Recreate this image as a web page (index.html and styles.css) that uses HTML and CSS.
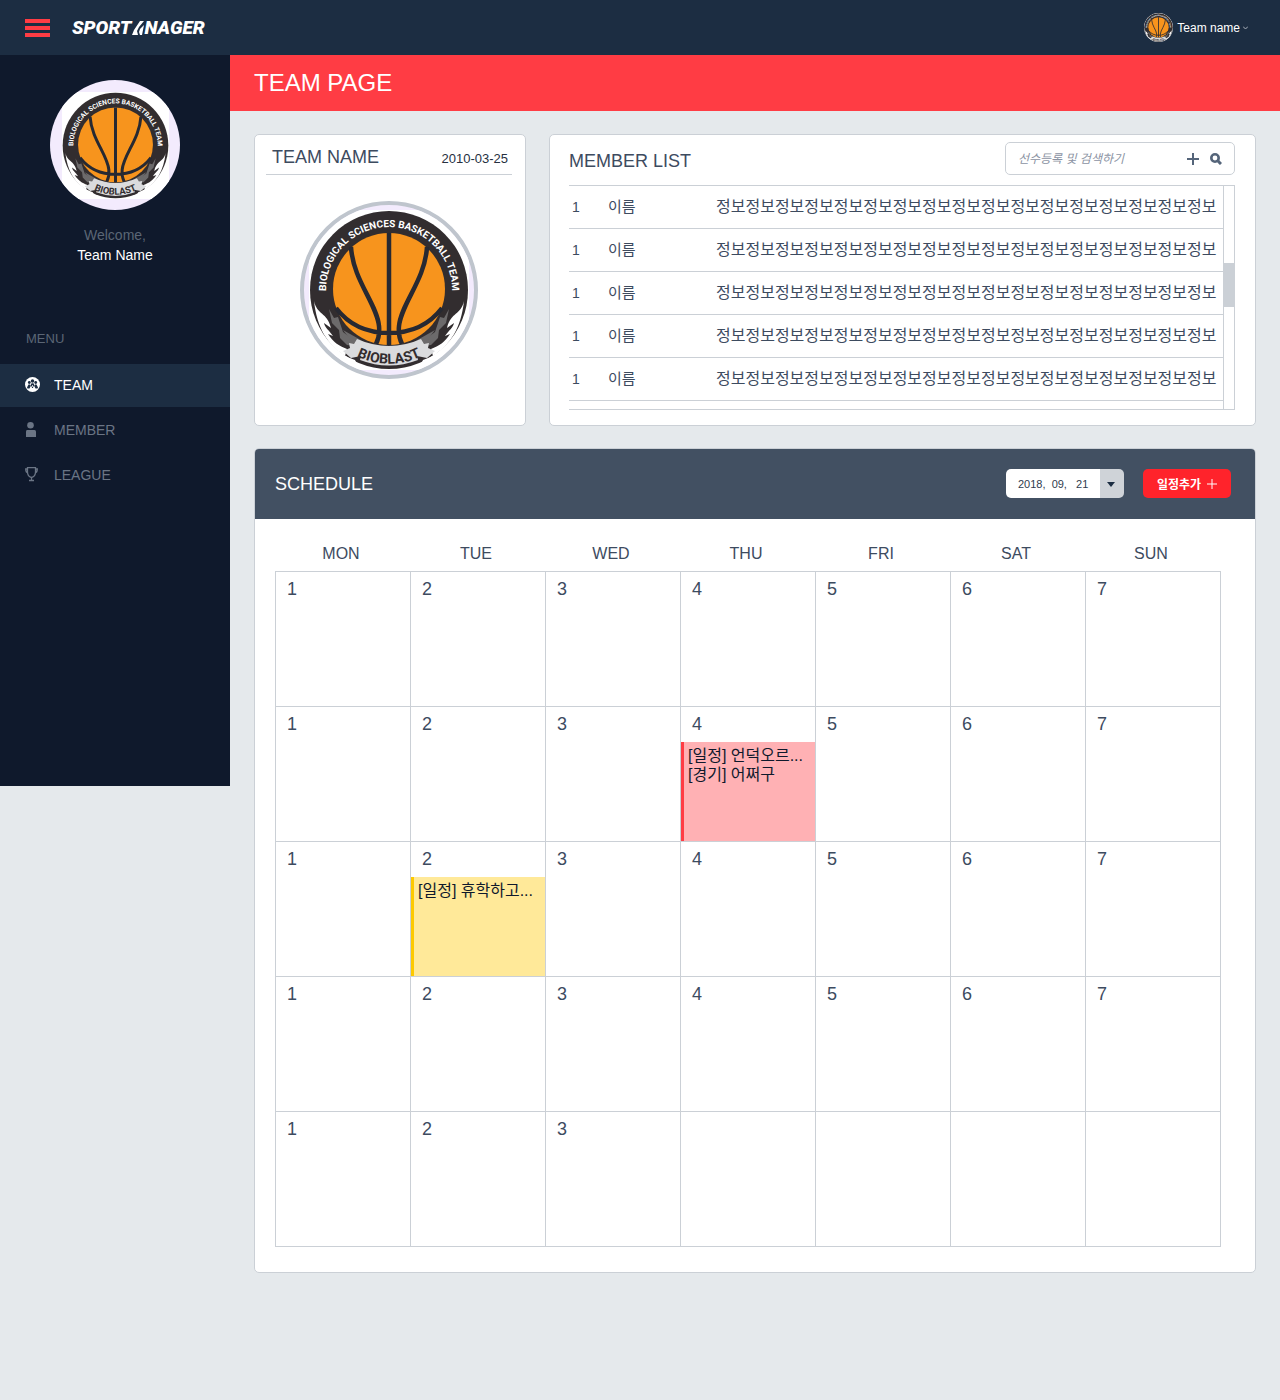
FILE: index.html
```html
<!DOCTYPE html>
<html lang="ko">
<head>
<meta charset="utf-8">
<meta name="viewport" content="width=device-width, initial-scale=1">
<title>Team page</title>
<link rel="stylesheet" href="styles.css">
</head>
<body>
<header class="topbar">
  <button class="burger" type="button" aria-label="Toggle menu"><span></span><span></span><span></span></button>
  <a class="brand" href="#"><span>SPORT</span><svg class="brand-mark" width="13" height="14" viewBox="0 0 13 14" aria-hidden="true"><path d="M9 0H13L8 6 6 10 7 14H1L3 9Z M9 8L13 4 11 14H9L8 11Z" fill="#fff"/></svg><span>NAGER</span></a>
  <button class="account" type="button">
    <svg class="account-logo" width="29" height="29" viewBox="-80 -80 160 160" aria-hidden="true"><use href="#emblem"/></svg>
    <span>Team name</span>
    <svg class="chevron" width="5" height="4" viewBox="0 0 5 4" aria-hidden="true"><path d="M0 0.500L2.500 3 5 0.500" fill="none" stroke="#aab2bc"/></svg>
  </button>
</header>

<div class="layout">
  <aside class="sidebar">
    <div class="avatar"><svg width="107" height="107" viewBox="-80 -80 160 160" role="img" aria-label="Bioblast"><use href="#emblem"/></svg></div>
    <p class="welcome">Welcome,</p>
    <p class="welcome-name">Team Name</p>
    <h2 class="menu-title">MENU</h2>
    <nav class="menu">
      <a class="menu-item is-active" href="#"><svg width="15" height="15" viewBox="0 0 15 15" aria-hidden="true"><circle cx="7.500" cy="7.500" r="7.500" fill="#fff"/><g fill="#1c2d42"><circle cx="7.500" cy="4" r="1.700"/><circle cx="4.300" cy="5.500" r="1.400"/><circle cx="10.700" cy="5.500" r="1.400"/><path d="M5.500 8.500L6.500 6.200H8.500L9.500 8.500 8.500 11H6.500ZM2 10.500L3.500 7.500H5L5.500 9.500 4.500 11.500H2.500ZM13 10.500L11.500 7.500H10L9.500 9.500 10.500 11.500H12.500Z"/></g><path d="M7.500 8.500L5.500 12M7.500 8.500L9.500 12" stroke="#fff"/></svg>TEAM</a>
      <a class="menu-item" href="#"><svg width="15" height="15" viewBox="0 0 15 15" fill="#6b7585" aria-hidden="true"><circle cx="5.500" cy="3.300" r="3.300"/><path d="M2 8H9.500Q11 8 11 9.500V15H1V9.500Q1 8 2 8Z"/></svg>MEMBER</a>
      <a class="menu-item" href="#"><svg width="15" height="15" viewBox="0 0 15 15" fill="none" stroke="#6b7585" stroke-width="1.300" aria-hidden="true"><path d="M2.500 0.700H10.500V5Q10.500 9.500 6.500 10.500 2.500 9.500 2.500 5ZM2.500 2H0.700Q0.700 5.500 3 6M10.500 2H12.300Q12.300 5.500 10 6M6.500 10.500V13.500M4 13.500H9"/></svg>LEAGUE</a>
    </nav>
  </aside>

  <main class="main">
    <h1 class="page-title">TEAM PAGE</h1>
    <div class="content">
      <div class="cards">
        <section class="card team-card">
          <div class="team-head"><h2>TEAM NAME</h2><time datetime="2010-03-25">2010-03-25</time></div>
          <div class="team-logo">
            <svg width="160" height="160" viewBox="-80 -80 160 160" role="img" aria-label="Bioblast">
              <g id="emblem">
                <rect x="-80" y="-80" width="160" height="160" fill="#fff"/>
                <circle r="79" fill="#322d2f"/>
                <g id="flame">
                  <path d="M-75 11C-72 25-62 22-58 38L-65 33C-64 38-60 40-56 46L-61 44C-56 52-50 56-42 59L-44 66C-62 54-72 38-75 11Z" fill="#fff"/>
                  <path d="M-68 43C-60 56-50 64-34 70L-32 74C-50 69-62 58-68 43Z" fill="#fff"/>
                  <path d="M-60 19L-55 28-51 27-46 42-38 48-34 56-42 55-49 48-50 40-57 33Z" fill="#6c6a6b"/>
                  <path d="M-46 40L-30 49-20 56-34 56Z" fill="#6c6a6b"/>
                </g>
                <use href="#flame" transform="scale(-1 1)"/>
                <circle r="56" cy="-1" fill="#f7941d"/>
                <path d="M0-57V55M-38-43C-36-10-12 14-10 36Q-9 46-13 54M38-43C36-10 12 14 10 36Q9 46 13 54M-53 18Q-34 43 0 43T53 18" fill="none" stroke="#272932" stroke-width="4.500"/>
                <path d="M-32 49Q0 63 32 49L35 54 40 53 39 58 46 61 38 68 28 66 29 70Q0 81-29 70L-28 66-38 68-46 61-39 58-40 53-35 54Z" fill="#dadbdd"/>
                <path id="arc-top" d="M-63 0A63 63 0 0 1 63 0" fill="none"/>
                <path id="arc-bottom" d="M-60 43A74 74 0 0 0 60 43" fill="none"/>
                <text class="emblem-ring"><textPath href="#arc-top" startOffset="50%">BIOLOGICAL SCIENCES BASKETBALL TEAM</textPath></text>
                <text class="emblem-name"><textPath href="#arc-bottom" startOffset="50%">BIOBLAST</textPath></text>
              </g>
            </svg>
          </div>
        </section>
        <section class="card member-card">
          <div class="member-head">
            <h2>MEMBER LIST</h2>
            <form class="search">
              <input type="search" aria-label="선수등록 및 검색하기" placeholder="선수등록 및 검색하기">
              <button type="button" aria-label="선수등록"><svg width="12" height="12" viewBox="0 0 12 12"><path d="M6 0V12M0 6H12" stroke="#55657a" stroke-width="2"/></svg></button>
              <button type="submit" aria-label="검색"><svg width="12" height="12" viewBox="0 0 12 12"><circle cx="5" cy="5" r="3.700" fill="none" stroke="#55657a" stroke-width="2.600"/><path d="M7.500 7.500L11 11" stroke="#55657a" stroke-width="3"/></svg></button>
            </form>
          </div>
          <div class="member-list">
            <table class="members">
              <tbody>
                <tr><td class="no">1</td><td class="name">이름</td><td>정보정보정보정보정보정보정보정보정보정보정보정보정보정보정보정보정보</td></tr>
                <tr><td class="no">1</td><td class="name">이름</td><td>정보정보정보정보정보정보정보정보정보정보정보정보정보정보정보정보정보</td></tr>
                <tr><td class="no">1</td><td class="name">이름</td><td>정보정보정보정보정보정보정보정보정보정보정보정보정보정보정보정보정보</td></tr>
                <tr><td class="no">1</td><td class="name">이름</td><td>정보정보정보정보정보정보정보정보정보정보정보정보정보정보정보정보정보</td></tr>
                <tr><td class="no">1</td><td class="name">이름</td><td>정보정보정보정보정보정보정보정보정보정보정보정보정보정보정보정보정보</td></tr>
              </tbody>
            </table>
            <div class="scrollbar"><div class="thumb"></div></div>
          </div>
        </section>
      </div>

      <section class="card schedule">
        <div class="schedule-head">
          <h2>SCHEDULE</h2>
          <div class="date-picker">
            <select aria-label="날짜"><option>2018,&nbsp; 09,&nbsp;&nbsp; 21</option></select>
            <svg class="caret" width="8" height="5" viewBox="0 0 8 5" aria-hidden="true"><path d="M0 0H8L4 5Z" fill="#1c2d42"/></svg>
          </div>
          <button class="add" type="button">일정추가<svg width="10" height="10" viewBox="0 0 10 10" aria-hidden="true"><path d="M5 0V10M0 5H10" stroke="#fff"/></svg></button>
        </div>
        <div class="schedule-body">
          <table class="calendar">
            <thead><tr><th>MON</th><th>TUE</th><th>WED</th><th>THU</th><th>FRI</th><th>SAT</th><th>SUN</th></tr></thead>
            <tbody>
              <tr><td><p class="day">1</p></td><td><p class="day">2</p></td><td><p class="day">3</p></td><td><p class="day">4</p></td><td><p class="day">5</p></td><td><p class="day">6</p></td><td><p class="day">7</p></td></tr>
              <tr><td><p class="day">1</p></td><td><p class="day">2</p></td><td><p class="day">3</p></td><td><p class="day">4</p><div class="event event-red"><p>[일정] 언덕오르...</p><p>[경기] 어쩌구</p></div></td><td><p class="day">5</p></td><td><p class="day">6</p></td><td><p class="day">7</p></td></tr>
              <tr><td><p class="day">1</p></td><td><p class="day">2</p><div class="event event-yellow"><p>[일정] 휴학하고...</p></div></td><td><p class="day">3</p></td><td><p class="day">4</p></td><td><p class="day">5</p></td><td><p class="day">6</p></td><td><p class="day">7</p></td></tr>
              <tr><td><p class="day">1</p></td><td><p class="day">2</p></td><td><p class="day">3</p></td><td><p class="day">4</p></td><td><p class="day">5</p></td><td><p class="day">6</p></td><td><p class="day">7</p></td></tr>
              <tr><td><p class="day">1</p></td><td><p class="day">2</p></td><td><p class="day">3</p></td><td></td><td></td><td></td><td></td></tr>
            </tbody>
          </table>
        </div>
      </section>
    </div>
  </main>
</div>
</body>
</html>
```

FILE: styles.css
```css
* { box-sizing: border-box; }

body {
  margin: 0;
  background: #e5e9ec;
  color: #3d4b5f;
  font-family: "Liberation Sans", "Noto Sans CJK KR", sans-serif;
  font-size: 14px;
}

h1, h2, p { margin: 0; font-weight: 400; }
h2 { font-size: 18px; line-height: 28px; }
a { color: inherit; text-decoration: none; }
svg { display: block; flex: none; }
button, input, select { font: inherit; color: inherit; border: 0; padding: 0; background: none; }

/* Club emblem */
.emblem-ring, .emblem-name {
  font-family: Roboto, "Liberation Sans", sans-serif;
  font-weight: 700;
  text-anchor: middle;
}
.emblem-ring { font-size: 10px; fill: #fff; }
.emblem-name { font-size: 14px; fill: #322d2f; }

/* Top bar */
.topbar {
  display: flex;
  align-items: center;
  height: 55px;
  padding: 0 32px 0 25px;
  background: #1c2d42;
  color: #fff;
}
.burger { display: flex; flex-direction: column; gap: 3px; width: 25px; }
.burger span { height: 4px; width: 100%; background: #ff3c44; }
.brand {
  display: flex;
  align-items: center;
  margin-left: 22px;
  font: italic 900 19px/24px Roboto, "Liberation Sans", sans-serif;
}
.account { display: flex; align-items: center; margin-left: auto; gap: 4px; font-size: 12px; }
.account-logo { border-radius: 50%; }
.chevron { margin-left: -1px; }

/* Sidebar */
.layout { display: flex; align-items: flex-start; }
.sidebar {
  flex: none;
  width: 230px;
  min-height: 731px;
  padding-top: 25px;
  background: #0f192c;
  color: #6b7585;
}
.avatar {
  display: flex;
  align-items: center;
  justify-content: center;
  width: 130px;
  height: 130px;
  margin: 0 auto 15px;
  border-radius: 50%;
  background: #f3ebfd;
  overflow: hidden;
}
.welcome, .welcome-name { text-align: center; line-height: 20px; }
.welcome { color: #5b6675; }
.welcome-name { color: #fff; }
.menu-title { margin: 64px 0 15px 26px; font-size: 13px; line-height: 20px; color: #5b6675; }
.menu { display: flex; flex-direction: column; gap: 2px; }
.menu-item { display: flex; align-items: center; gap: 14px; height: 43px; padding: 0 0 2px 25px; }
.menu-item.is-active { background: #1c2d42; color: #fff; }

/* Main */
.main { flex: 1; min-width: 0; }
.page-title {
  padding-left: 24px;
  background: #ff3c44;
  color: #fff;
  font-size: 24px;
  line-height: 56px;
}
.content { display: flex; flex-direction: column; gap: 22px; padding: 23px 24px 24px; }
.cards { display: grid; grid-template-columns: 272px 1fr; gap: 23px; }
.card { border: 1px solid #cbd0d6; border-radius: 5px; background: #fff; overflow: hidden; }

.team-card { padding: 0 13px 0 11px; }
.team-head {
  display: flex;
  align-items: center;
  justify-content: space-between;
  height: 40px;
  padding: 5px 4px 0 6px;
  border-bottom: 1px solid #cbd0d6;
}
.team-head time { font-size: 13px; line-height: 20px; padding-top: 4px; color: #26303f; }
.team-logo {
  display: flex;
  align-items: center;
  justify-content: center;
  width: 178px;
  height: 178px;
  margin: 26px auto 0;
  border: 4px solid #bfc5cd;
  border-radius: 50%;
  background: #f3ebfd;
  overflow: hidden;
}

.member-card { padding: 7px 20px 15px 19px; }
.member-head { display: flex; align-items: flex-end; justify-content: space-between; margin-bottom: 10px; }
.search {
  display: flex;
  align-items: center;
  gap: 11px;
  width: 230px;
  height: 33px;
  padding: 0 12px;
  border: 1px solid #cbd0d6;
  border-radius: 5px;
}
.search input { flex: 1; min-width: 0; font-size: 12px; font-style: italic; outline: 0; }
.search input::placeholder { color: #8b93a3; opacity: 1; }
.member-list {
  display: flex;
  height: 225px;
  border: solid #cbd0d6;
  border-width: 1px 0;
  overflow: hidden;
}
.members { flex: 1; border-collapse: separate; border-spacing: 0; align-self: flex-start; }
.members td {
  height: 43px;
  padding: 0;
  border-bottom: 1px solid #cbd0d6;
  font-size: 16px;
  line-height: 20px;
  white-space: nowrap;
}
.members .no { width: 39px; padding-left: 3px; font-size: 14px; }
.members .name { width: 108px; font-size: 15px; }
.scrollbar { flex: none; width: 12px; border: solid #cbd0d6; border-width: 0 1px; }
.thumb { height: 44px; margin-top: 77px; background: #cbd0d6; }

/* Schedule */
.schedule-head {
  display: flex;
  align-items: center;
  height: 70px;
  padding: 0 24px 1px 20px;
  background: #425062;
  color: #fff;
}
.date-picker { position: relative; margin: 0 19px 0 auto; }
.date-picker select {
  display: block;
  appearance: none;
  width: 118px;
  height: 29px;
  padding: 0 24px 0 12px;
  border-radius: 5px;
  background: linear-gradient(to right, #fff 94px, #cfd3d8 94px);
  color: #2f3c4e;
  font-size: 11px;
}
.caret { position: absolute; right: 9px; top: 13px; pointer-events: none; }
.add {
  display: flex;
  align-items: center;
  justify-content: center;
  gap: 6px;
  width: 88px;
  height: 29px;
  border-radius: 5px;
  background: #ff232b;
  font-size: 12px;
  font-weight: 700;
}
.schedule-body { padding: 18px 34px 25px 20px; }
.calendar { width: 100%; table-layout: fixed; border-collapse: collapse; }
.calendar th { padding: 0 4px 0 0; font-size: 16px; font-weight: 400; line-height: 34px; }
.calendar td { height: 135px; padding: 0; border: 1px solid #cbd0d6; vertical-align: top; }
.day { padding-left: 11px; font-size: 18px; line-height: 35px; }
.event {
  height: 99px;
  padding: 4px 0 0 4px;
  border-left: 3px solid;
  color: #0f192c;
  font-size: 16px;
  line-height: 19px;
  white-space: nowrap;
  overflow: hidden;
}
.event-red { border-color: #ff3c44; background: #ffb1b4; }
.event-yellow { border-color: #fdc900; background: #ffe999; }
```
